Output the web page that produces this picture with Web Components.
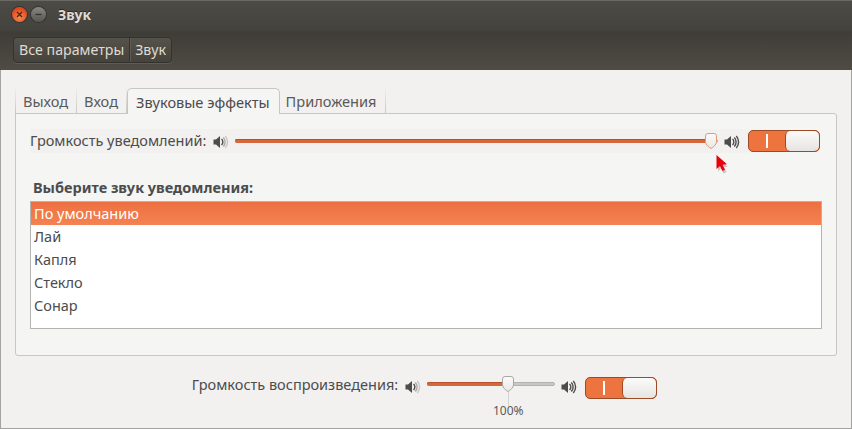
<!DOCTYPE html>
<html lang="ru">
<head>
<meta charset="utf-8">
<title>Звук</title>
<style>
  html, body { margin: 0; padding: 0; }
  body { width: 852px; height: 429px; overflow: hidden; background: #f2f1f0; font-family: "Noto Sans", "Open Sans", sans-serif; font-size: 14.5px; color: #4c4c4c; }
</style>
</head>
<body>
<sound-window>
  <title-bar slot="head">Звук</title-bar>
  <path-bar slot="head"><span>Все параметры</span><span>Звук</span></path-bar>

  <tab-strip>
    <tab-item>Выход</tab-item>
    <tab-item>Вход</tab-item>
    <tab-item active>Звуковые эффекты</tab-item>
    <tab-item>Приложения</tab-item>
  </tab-strip>

  <effects-panel>
    <volume-row slot="volume" band label="Громкость уведомлений:" value="98.5" track="483"></volume-row>
    <sound-list>
      <sound-item selected>По умолчанию</sound-item>
      <sound-item>Лай</sound-item>
      <sound-item>Капля</sound-item>
      <sound-item>Стекло</sound-item>
      <sound-item>Сонар</sound-item>
    </sound-list>
  </effects-panel>

  <volume-row slot="foot" label="Громкость воспроизведения:" value="63.4" track="128" caption="100%"></volume-row>
  <mouse-pointer slot="over"></mouse-pointer>
</sound-window>

<script>
// иконка динамика, общая для всех строк громкости
const speakerIcon = (loud) => `
  <svg width="16" height="14" viewBox="0 0 16 14" aria-hidden="true">
    <path d="M0.500 4.500h2.500L7 1v12L3 9.500H0.500z" fill="#4c4c4c"/>
    <path d="M8.500 4a4 4 0 0 1 0 6" fill="none" stroke="#4c4c4c" stroke-width="1.400"/>
    <path d="M10.300 2.500a6.500 6.500 0 0 1 0 9" fill="none" stroke="${loud ? '#4c4c4c' : '#a9a7a4'}" stroke-width="1.400"/>
    <path d="M12.300 1a9 9 0 0 1 0 12" fill="none" stroke="${loud ? '#4c4c4c' : '#c9c7c4'}" stroke-width="1.400"/>
  </svg>`;

class SoundWindow extends HTMLElement {
  constructor() {
    super();
    this.attachShadow({ mode: 'open' }).innerHTML = `
      <style>
        :host { display: flex; flex-direction: column; position: relative; width: 852px; height: 429px; box-sizing: border-box; border-left: 1px solid #a5a39f; border-right: 1px solid #a5a39f; border-bottom: 1px solid #a5a39f; }
        header { display: flex; flex-direction: column; height: 70px; margin: 0 -1px; background: linear-gradient(#4d4b45, #45433d 28px, #3f3d38 32px, #4f4c44); border-top: 1px solid #6b6963; box-sizing: border-box; }
        main { padding: 18px 14px 0 14px; }
        footer { display: flex; justify-content: center; padding: 15px 3px 0 0; }
      </style>
      <header><slot name="head"></slot></header>
      <main><slot></slot></main>
      <footer><slot name="foot"></slot></footer>
      <slot name="over"></slot>`;
  }
}

class TitleBar extends HTMLElement {
  constructor() {
    super();
    this.attachShadow({ mode: 'open' }).innerHTML = `
      <style>
        :host { display: flex; align-items: center; height: 27px; padding-left: 12px; color: #dfdbd2; font-weight: 700; font-size: 14px; }
        .btn { width: 15px; height: 15px; border-radius: 50%; display: flex; align-items: center; justify-content: center; box-shadow: 0 0 0 1px #35332e; margin-right: 4px; }
        .close { background: radial-gradient(circle at 50% 70%, #f58a50, #e0481c 70%); }
        .min { background: linear-gradient(#8a8883, #57554f); }
        .label { margin-left: 8px; text-shadow: 0 -1px 0 #2c2a26; }
      </style>
      <span class="btn close"><svg width="7" height="7" viewBox="0 0 7 7"><path d="M1 1l5 5M6 1L1 6" stroke="#4a2317" stroke-width="1.200"/></svg></span>
      <span class="btn min"><svg width="7" height="7" viewBox="0 0 7 7"><path d="M0.500 3.500h6" stroke="#33312d" stroke-width="1.300"/></svg></span>
      <span class="label"><slot></slot></span>`;
  }
}

class PathBar extends HTMLElement {
  constructor() {
    super();
    this.attachShadow({ mode: 'open' }).innerHTML = `
      <style>
        :host { display: flex; align-items: flex-start; padding: 9px 0 0 13px; color: #dfdbd2; font-size: 14.200px; }
        .group { display: flex; height: 26px; box-sizing: border-box; border: 1px solid #35332e; border-radius: 4px; background: linear-gradient(#55524b, #46433d); box-shadow: 0 1px 0 #5e5c55; line-height: 23px; }
        ::slotted(span) { padding: 0 5px; }
        ::slotted(span:first-child) { border-right: 1px solid #35332e; box-shadow: 1px 0 0 #5e5c55; }
      </style>
      <div class="group"><slot></slot></div>`;
  }
}

class TabStrip extends HTMLElement {
  constructor() {
    super();
    this.attachShadow({ mode: 'open' }).innerHTML = `
      <style>
        :host { display: flex; align-items: flex-end; height: 26px; margin-bottom: -1px; position: relative; z-index: 1; }
      </style>
      <slot></slot>`;
  }
}

class TabItem extends HTMLElement {
  constructor() {
    super();
    this.attachShadow({ mode: 'open' }).innerHTML = `
      <style>
        :host { display: block; box-sizing: border-box; height: 26px; line-height: 26px; padding: 0 8px 0 7px; border-bottom: 1px solid #c8c6c1; border-right: 1px solid transparent; border-image: linear-gradient(transparent, #d5d2cd 70%, #c8c6c1) 1; color: #5a5a58; font-size: 14.600px; }
        :host(:first-child) { border-left: 1px solid transparent; }
        :host(:last-child) { padding: 0 9px 0 6px; }
        :host([active]) { border: 1px solid #c8c6c1; border-image: none; border-bottom: 0; background: #f5f5f4; border-radius: 5px 5px 0 0; padding: 0 9px 0 8px; color: #4c4c4c; }
      </style>
      <slot></slot>`;
  }
}

class EffectsPanel extends HTMLElement {
  constructor() {
    super();
    this.attachShadow({ mode: 'open' }).innerHTML = `
      <style>
        :host { display: block; height: 243px; box-sizing: border-box; background: #f5f5f4; border: 1px solid #c8c6c1; border-radius: 0 3px 3px 3px; padding: 14px 14px 0 14px; }
        h3 { margin: 21px 0 4px 3px; font-size: 14.500px; line-height: 20px; font-weight: 700; color: #4c4c4c; }
      </style>
      <slot name="volume"></slot>
      <h3>Выберите звук уведомления:</h3>
      <slot></slot>`;
  }
}

class VolumeRow extends HTMLElement {
  constructor() {
    super();
    const label = this.getAttribute('label');
    const value = Number(this.getAttribute('value'));
    const track = this.getAttribute('track');
    const caption = this.getAttribute('caption');
    // нижняя строка: подпись и значки ниже рельса
    const drop = caption ? 2 : 0;
    this.attachShadow({ mode: 'open' }).innerHTML = `
      <style>
        :host { display: flex; align-items: flex-start; height: 28px; }
        :host([band]) { background: linear-gradient(#f2f1f0, #f2f1f0) no-repeat 0 1px / 718px 24px; }
        .label { line-height: 25px; margin-top: ${drop / 2}px; margin-right: 7px; white-space: nowrap; }
        .icon { height: 14px; margin-top: ${5 + drop}px; display: block; }
        .slider { position: relative; width: ${track}px; height: 25px; margin: 0 6px; flex: none; }
        .rail { position: absolute; left: 0; right: 0; top: 11px; height: 2px; background: #c9c7c3; border: 1px solid #b5b3af; border-radius: 3px; }
        .fill { position: absolute; left: 0; top: 11px; height: 4px; width: ${value}%; background: #d6673a; border-radius: 3px; box-shadow: inset 0 1px 0 #b9512a; }
        .thumb { position: absolute; left: calc(${value}% - 6px); top: 5px; width: 12px; height: 16px; }
        .mark { position: absolute; left: ${value}%; top: 21px; width: 1px; height: 14px; background: #d5d3cf; }
        .caption { position: absolute; left: ${value}%; top: 32px; transform: translateX(-50%); font-size: 12px; line-height: 16px; color: #5a5a58; }
        .toggle { margin-top: ${2 + drop * 2}px; }
      </style>
      <span class="label">${label}</span>
      <span class="icon">${speakerIcon(false)}</span>
      <div class="slider">
        <div class="rail"></div>
        <div class="fill"></div>
        ${caption ? `<div class="mark"></div><div class="caption">${caption}</div>` : ''}
        <svg class="thumb" viewBox="0 0 12 16" aria-hidden="true">
          <defs><linearGradient id="th" x1="0" y1="0" x2="0" y2="1"><stop offset="0" stop-color="#fbfbfa"/><stop offset="1" stop-color="#e9e7e4"/></linearGradient></defs>
          <path d="M3 .500h6A2.500 2.500 0 0 1 11.500 3v6c0 2.500-3.500 5.500-5.500 6.500C4 14.500.500 11.500.500 9V3A2.500 2.500 0 0 1 3 .500z" fill="url(#th)" stroke="${caption ? '#a9a7a3' : '#dd9b80'}"/>
        </svg>
      </div>
      <span class="icon">${speakerIcon(true)}</span>
      <switch-toggle class="toggle"></switch-toggle>`;
  }
}

class SwitchToggle extends HTMLElement {
  constructor() {
    super();
    this.attachShadow({ mode: 'open' }).innerHTML = `
      <style>
        :host { display: flex; flex: none; width: 72px; height: 22px; box-sizing: border-box; border: 1px solid #9c4a26; border-radius: 5px; background: #ee743f; overflow: hidden; margin-left: 8px; }
        .on { flex: 1; display: flex; align-items: center; justify-content: center; }
        .bar { width: 2px; height: 14px; background: #fff; }
        .knob { width: 33px; border-left: 1px solid #9c4a26; border-radius: 5px; background: linear-gradient(#fbfbfa, #e6e4e1); }
      </style>
      <span class="on"><span class="bar"></span></span>
      <span class="knob"></span>`;
  }
}

class SoundList extends HTMLElement {
  constructor() {
    super();
    this.attachShadow({ mode: 'open' }).innerHTML = `
      <style>
        :host { display: block; height: 128px; box-sizing: border-box; background: #fff; border: 1px solid #b5b3af; }
      </style>
      <slot></slot>`;
  }
}

class SoundItem extends HTMLElement {
  constructor() {
    super();
    this.attachShadow({ mode: 'open' }).innerHTML = `
      <style>
        :host { display: block; height: 23px; line-height: 23px; padding-left: 3px; color: #4c4c4c; }
        :host([selected]) { color: #fff; background: linear-gradient(#ec7041, #f58251); }
      </style>
      <slot></slot>`;
  }
}

// красный указатель мыши лежит поверх окна
class MousePointer extends HTMLElement {
  constructor() {
    super();
    this.attachShadow({ mode: 'open' }).innerHTML = `
      <style>
        :host { display: block; position: absolute; left: 714px; top: 154px; width: 14px; height: 20px; }
        svg { display: block; }
      </style>
      <svg width="14" height="20" viewBox="0 0 14 20" aria-hidden="true">
        <path d="M3 3l9.500 9.800-3.500.5 2.500 4.700-3 1.500-2.500-5-3 2.700z" fill="#b5b3b0" opacity=".75"/>
        <path d="M1.500 1v14l3.500-3 2.500 5 2.500-1.300-2.500-4.900 4.500-.5z" fill="#e8000b"/>
      </svg>`;
  }
}

customElements.define('sound-window', SoundWindow);
customElements.define('title-bar', TitleBar);
customElements.define('path-bar', PathBar);
customElements.define('tab-strip', TabStrip);
customElements.define('tab-item', TabItem);
customElements.define('effects-panel', EffectsPanel);
customElements.define('switch-toggle', SwitchToggle);
customElements.define('volume-row', VolumeRow);
customElements.define('sound-list', SoundList);
customElements.define('sound-item', SoundItem);
customElements.define('mouse-pointer', MousePointer);
</script>
</body>
</html>
